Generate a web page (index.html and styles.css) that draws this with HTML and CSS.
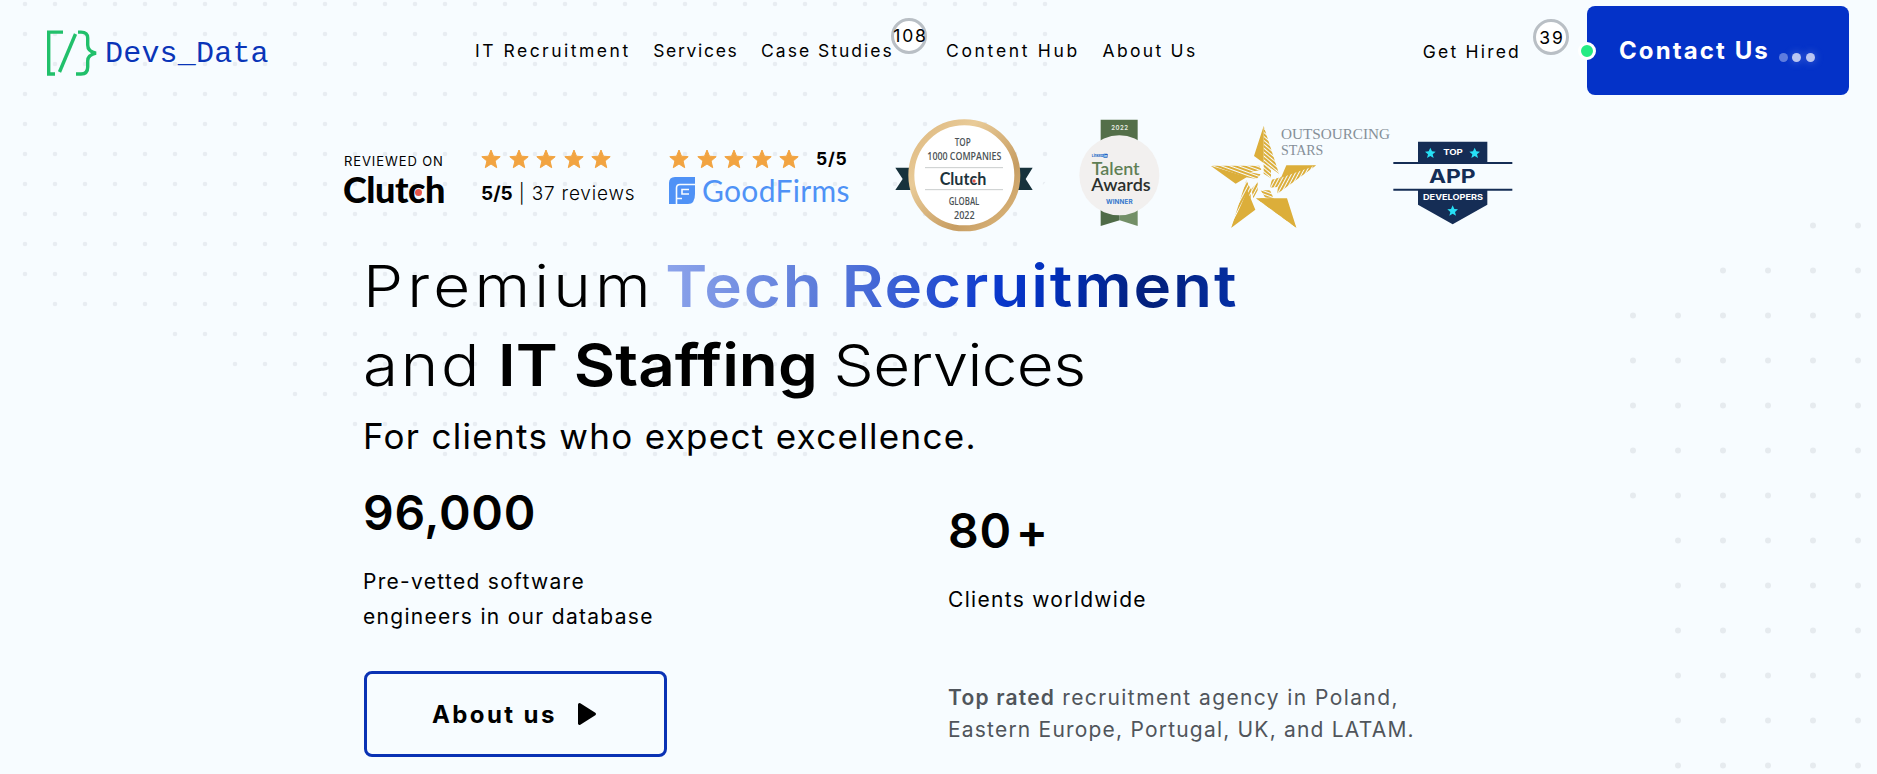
FILE: index.html
```
<!DOCTYPE html>
<html lang="en">
<head>
    <meta charset="UTF-8">
    <meta name="viewport" content="width=device-width, initial-scale=1.0">
    <title>Devs_Data</title>
    <link rel="stylesheet" href="styles.css">
</head>
<body>
    <!-- Dotted background -->
    <svg class="dots" width="1877" height="774" aria-hidden="true">
        <defs>
            <pattern id="dotsLeft" x="10" y="-11" width="30" height="30" patternUnits="userSpaceOnUse">
                <circle cx="15" cy="15" r="2.3" fill="#e8edf2"/>
            </pattern>
            <pattern id="dotsRight" x="1611" y="203" width="45" height="45" patternUnits="userSpaceOnUse">
                <circle cx="22" cy="22.5" r="3" fill="#e6ebef"/>
            </pattern>
        </defs>
        <path fill="url(#dotsLeft)" d="M10 0H1060V165L1030 200V259H1000V289H970V349H910V379H850V409H820V469H430V439H340V409H280V379H220V349H160V319H40V289H10Z"/>
        <path fill="url(#dotsRight)" d="M1791 203H1877V774H1656V518H1611V293H1701V248H1791Z"/>
    </svg>

    <!-- Header -->
    <header class="header">
        <a href="#" class="logo">
            <svg width="52" height="48" viewBox="0 0 52 48" fill="none" stroke="#21c06b" stroke-width="3.4">
                <path d="M18 2.1H3.7V44H10"/>
                <path d="M30.5 4L14.5 42"/>
                <path d="M33 2.1H36C41 2.1 42.7 4.5 42.7 8V15C42.7 19 45 22 51 23.2C45 24.5 42.7 27 42.7 31V37C42.7 41.5 40.5 44 36 44H31"/>
            </svg>
            <span class="logo-text">Devs_Data</span>
        </a>
        <nav class="nav">
            <a href="#" class="nav-recruitment">IT Recruitment</a>
            <a href="#" class="nav-services">Services</a>
            <a href="#" class="nav-cases">Case Studies<span class="count">108</span></a>
            <a href="#" class="nav-content">Content Hub</a>
            <a href="#" class="nav-about">About Us</a>
        </nav>
        <a href="#" class="get-hired">Get Hired<span class="count">39</span></a>
        <a href="#" class="contact">
            <span>Contact Us</span>
            <span class="typing"><i></i><i></i><i></i></span>
        </a>
    </header>

    <!-- Reviews and awards -->
    <section class="awards">
        <svg width="0" height="0" class="defs">
            <symbol id="star" viewBox="0 0 20 20">
                <path fill="#f2a441" stroke="#f2a441" stroke-width="1" stroke-linejoin="round" d="M10 1L12.5 7.2L19.2 7.7L14.1 12L15.7 18.7L10 15L4.3 18.7L5.9 12L.8 7.7L7.5 7.2Z"/>
            </symbol>
        </svg>
        <div class="reviewed">
            <span class="reviewed-label">REVIEWED ON</span>
            <span class="clutch">Clutch</span>
        </div>
        <div class="rating">
            <div class="stars">
                <svg><use href="#star"/></svg><svg><use href="#star"/></svg><svg><use href="#star"/></svg><svg><use href="#star"/></svg><svg><use href="#star"/></svg>
            </div>
            <p class="rating-text"><b>5/5</b> | 37 reviews</p>
        </div>
        <div class="goodfirms">
            <div class="stars">
                <svg><use href="#star"/></svg><svg><use href="#star"/></svg><svg><use href="#star"/></svg><svg><use href="#star"/></svg><svg><use href="#star"/></svg>
                <b>5/5</b>
            </div>
            <div class="goodfirms-logo">
                <svg width="26" height="27" viewBox="0 0 26 27">
                    <path fill="#4f92f6" d="M6 0H26V17Q26 27 19 27H0V6Q0 0 6 0Z"/>
                    <path fill="none" stroke="#f7fcff" stroke-width="1.6" d="M26 7.5H11Q7.5 7.5 7.5 11V27M20 12.5H13V17H20M7.5 21.5H13"/>
                </svg>
                <span>GoodFirms</span>
            </div>
        </div>

        <svg class="badge-clutch" width="138" height="113" viewBox="75 28 414 339">
            <defs>
                <linearGradient id="gold" x1="0" y1="0" x2="1" y2="1">
                    <stop offset="0" stop-color="#dcb67c"/>
                    <stop offset=".3" stop-color="#e9cb98"/>
                    <stop offset=".7" stop-color="#c79d62"/>
                    <stop offset="1" stop-color="#dfba80"/>
                </linearGradient>
            </defs>
            <path fill="#17323c" d="M76 174H140V241H76L98 208ZM488 174H424V241H488L467 208Z"/>
            <circle cx="283" cy="197" r="159" fill="#fff" stroke="url(#gold)" stroke-width="18"/>
            <path stroke="#c9cccd" stroke-width="3" d="M165 174H399M165 240H399"/>
            <g class="badge-caps" text-anchor="middle">
                <text x="278" y="108" textLength="48" lengthAdjust="spacingAndGlyphs">TOP</text>
                <text x="283" y="152" textLength="222" lengthAdjust="spacingAndGlyphs">1000 COMPANIES</text>
                <text x="282" y="285" textLength="92" lengthAdjust="spacingAndGlyphs">GLOBAL</text>
                <text x="283" y="329" textLength="62" lengthAdjust="spacingAndGlyphs">2022</text>
            </g>
            <text x="279" y="225" class="badge-brand" text-anchor="middle" textLength="140" lengthAdjust="spacingAndGlyphs">Clutch</text>
            <circle cx="312" cy="214" r="5" fill="#e8574a"/>
        </svg>

        <svg class="badge-talent" width="81" height="108" viewBox="628 28 243 324">
            <path fill="#546f49" d="M693 30H804V110H693Z"/>
            <path fill="#4f6b47" d="M693 300H750V332L693 349Z"/>
            <path fill="#738f67" d="M750 300H804V349L750 332Z"/>
            <circle cx="749" cy="197" r="120" fill="#f2f0ef"/>
            <text x="750" y="61" class="talent-year" text-anchor="middle" textLength="50">2022</text>
            <text x="666" y="143" class="talent-linked" textLength="34" lengthAdjust="spacingAndGlyphs">Linked</text>
            <rect x="701" y="132" width="13" height="12" rx="2" fill="#1c62c4"/>
            <text x="703" y="142" class="talent-in">in</text>
            <text x="666" y="196" class="talent-name green" textLength="144" lengthAdjust="spacingAndGlyphs">Talent</text>
            <text x="665" y="245" class="talent-name" textLength="178" lengthAdjust="spacingAndGlyphs">Awards</text>
            <text x="749" y="284" class="talent-winner" text-anchor="middle" textLength="80">WINNER</text>
        </svg>

        <svg class="badge-stars" width="182" height="104" viewBox="60 44 546 312">
            <defs>
                <pattern id="hatchA" width="9" height="9" patternUnits="userSpaceOnUse" patternTransform="rotate(40)">
                    <rect width="9" height="6" fill="#dcae3a"/>
                </pattern>
                <pattern id="hatchB" width="9" height="9" patternUnits="userSpaceOnUse" patternTransform="rotate(20)">
                    <rect width="9" height="6" fill="#dcae3a"/>
                </pattern>
                <pattern id="hatchC" width="9" height="9" patternUnits="userSpaceOnUse" patternTransform="rotate(-62)">
                    <rect width="9" height="6" fill="#dcae3a"/>
                </pattern>
            </defs>
            <path fill="#dcae3a" d="M221 47V158L192 137ZM62 166L171 200L137 220ZM379 165H289L273 202ZM124 352L196 298L172 240ZM319 352L291 264H198Z"/>
            <path fill="url(#hatchA)" d="M221 47L267 190L221 158ZM221 160L243 176V204L221 190Z"/>
            <path fill="url(#hatchB)" d="M62 166H208L214 178L180 186L212 192L200 206L165 200Z"/>
            <path fill="url(#hatchC)" d="M379 165L262 250L264 222L273 202L289 182ZM245 208L273 200L262 230L240 232Z"/>
            <path fill="url(#hatchC)" d="M124 352L169 210L184 240L178 300ZM184 236L203 216V240L190 264Z"/>
            <path fill="url(#hatchB)" d="M319 352L198 264H250L291 290ZM212 240H240L250 262H226Z"/>
            <g class="outsourcing">
                <text x="273" y="87" textLength="327" lengthAdjust="spacingAndGlyphs">OUTSOURCING</text>
                <text x="273" y="135" textLength="127" lengthAdjust="spacingAndGlyphs">STARS</text>
            </g>
        </svg>

        <svg class="badge-app" width="120" height="84" viewBox="610 94 360 252">
            <path fill="#152d55" d="M685 96H893V158H685ZM685 240H893V285L789 344L685 285Z"/>
            <path stroke="#152d55" stroke-width="6" d="M611 160H968M611 240H968"/>
            <g fill="#27e0f5">
                <path id="appStar" d="M722 114L727 125L738 126L729 134L732 145L722 139L712 145L715 134L706 126L717 125Z"/>
                <use href="#appStar" x="133"/>
                <use href="#appStar" x="67" y="173"/>
            </g>
            <g class="app-text" text-anchor="middle">
                <text x="790" y="137" textLength="59" lengthAdjust="spacingAndGlyphs">TOP</text>
                <text x="788" y="220" class="app-name" textLength="140" lengthAdjust="spacingAndGlyphs">APP</text>
                <text x="790" y="271" textLength="180" lengthAdjust="spacingAndGlyphs">DEVELOPERS</text>
            </g>
        </svg>
    </section>

    <!-- Hero -->
    <main class="hero">
        <h1>
            <span class="premium">Premium</span> <strong class="gradient">Tech Recruitment</strong><br>
            <span class="and">and</span> <strong class="staffing">IT Staffing</strong> <span class="services">Services</span>
        </h1>
        <p class="tagline">For clients who expect excellence.</p>
        <div class="columns">
            <div class="column">
                <div class="number">96,000</div>
                <p class="caption">Pre-vetted software<br>engineers in our database</p>
                <a href="#" class="about-btn">
                    <span>About us</span>
                    <svg width="20" height="24" viewBox="0 0 20 24"><path stroke="#000" stroke-width="3" stroke-linejoin="round" d="M2.5 2.5L17.5 12L2.5 21.5Z"/></svg>
                </a>
            </div>
            <div class="column column-clients">
                <div class="number">80<span class="plus">+</span></div>
                <p class="caption">Clients worldwide</p>
                <p class="note"><strong>Top rated</strong> <span class="agency">recruitment agency in Poland,</span><br>Eastern Europe, Portugal, UK, and LATAM.</p>
            </div>
        </div>
    </main>
</body>
</html>
```
FILE: styles.css
```
*,
*::before,
*::after {
    margin: 0;
    padding: 0;
    box-sizing: border-box;
}

body {
    position: relative;
    height: 774px;
    overflow: hidden;
    background: #f7fcff;
    color: #000;
    font-family: Inter, sans-serif;
}

a {
    color: inherit;
    text-decoration: none;
}

.dots {
    position: absolute;
    inset: 0;
    z-index: -1;
}

.defs {
    position: absolute;
}

/* Header */
.header {
    display: flex;
    align-items: center;
    height: 101px;
    padding: 0 28px 0 45px;
    font-size: 17.5px;
}

.logo {
    display: flex;
    align-items: center;
    gap: 8px;
    width: 430px;
    padding-top: 6px;
}

.logo-text {
    font: 30px "Liberation Mono", monospace;
    letter-spacing: 0.2px;
    color: #0a35b8;
}

.nav {
    display: flex;
    gap: 22.5px;
    margin-right: auto;
    padding-bottom: 1px;
}

.nav a,
.get-hired {
    display: flex;
    white-space: nowrap;
}

.nav-recruitment { letter-spacing: 2.5px; }
.nav-services { letter-spacing: 1.7px; }
.nav-cases { letter-spacing: 2px; }
.nav-content { letter-spacing: 2.7px; }
.nav-about { letter-spacing: 2.3px; }

.count {
    display: flex;
    flex-shrink: 0;
    align-items: center;
    justify-content: center;
    width: 36px;
    height: 36px;
    margin: -22px -4px -11px -2.3px;
    padding-left: 2px;
    border: 3px solid #b9bfc5;
    border-radius: 50%;
    background: #fff;
    letter-spacing: 1.8px;
}

.get-hired {
    padding-top: 2px;
    letter-spacing: 2.2px;
}

.get-hired .count {
    margin: -22px 18px -10px 12px;
}

.contact {
    position: relative;
    display: flex;
    align-items: center;
    width: 262px;
    height: 89px;
    padding-left: 32px;
    border-radius: 8px;
    background: #0432c8;
    color: #fff;
    font-size: 24px;
    font-weight: 700;
    letter-spacing: 2.1px;
}

.contact::before {
    content: "";
    position: absolute;
    left: -9px;
    top: 36px;
    width: 18px;
    height: 18px;
    border: 3px solid #fff;
    border-radius: 50%;
    background: #25eb83;
}

.typing {
    display: flex;
    gap: 4.5px;
    margin: 13px 0 0 9px;
}

.typing i {
    width: 9px;
    height: 9px;
    border-radius: 50%;
    background: #b9c5f2;
    box-shadow: 0 0 8px rgba(185, 197, 242, 0.4);
}

.typing i:first-child {
    background: #5e7cde;
    box-shadow: none;
}

/* Reviews */
.awards {
    display: flex;
    height: 130px;
    padding: 18px 0 0 344px;
}

.reviewed {
    display: flex;
    flex-direction: column;
    width: 136px;
    padding-top: 34px;
}

.reviewed-label {
    font-size: 13px;
    line-height: 16px;
    letter-spacing: 0.9px;
}

.clutch {
    position: relative;
    margin-left: -1px;
    font: 900 36px/40px Lato, sans-serif;
    letter-spacing: -0.4px;
}

.clutch::after {
    content: "";
    position: absolute;
    left: 72px;
    top: 20px;
    width: 7px;
    height: 7px;
    border-radius: 50%;
    background: #e4574a;
}

.rating {
    width: 188px;
    padding: 29px 0 0 1px;
}

.stars {
    display: flex;
    align-items: center;
    gap: 7.6px;
    height: 21px;
}

.stars svg {
    width: 20px;
    height: 20px;
}

.stars b {
    margin-left: 9px;
    font-size: 17.5px;
    letter-spacing: 0.8px;
}

.rating-text {
    margin-top: 13px;
    font-size: 19px;
    font-weight: 300;
    line-height: 23px;
    letter-spacing: 0.8px;
    white-space: nowrap;
}

.rating-text b {
    font-weight: 700;
    letter-spacing: 0;
}

.goodfirms {
    width: 227px;
    padding: 29px 0 0 1px;
}

.goodfirms-logo {
    display: flex;
    align-items: center;
    gap: 7px;
    margin-top: 5px;
    font: 30px/32px Lato, sans-serif;
    letter-spacing: 0.3px;
    color: #4f92f6;
}

.badge-talent {
    margin-left: 46px;
}

.badge-stars {
    margin: 6px 0 0 50px;
}

.badge-app {
    margin: 22px 0 0 1px;
}

.badge-caps {
    font: 600 33px "Open Sans", sans-serif;
    fill: #4c5356;
}

.badge-brand {
    font: 700 50px Lato, sans-serif;
    fill: #1d333c;
}

.talent-year {
    font: 600 18px Inter, sans-serif;
    fill: #e8ede5;
}

.talent-linked,
.talent-in {
    font: 700 12px Inter, sans-serif;
    fill: #1c62c4;
}

.talent-in {
    font-size: 10px;
    fill: #fff;
}

.talent-name {
    font: 600 52px Lato, sans-serif;
    fill: #2b2f2c;
}

.talent-name.green {
    fill: #5f7f55;
}

.talent-winner {
    font: 700 19px Inter, sans-serif;
    fill: #3478cc;
}

.outsourcing {
    font: 44px "Liberation Serif", serif;
    fill: #858f98;
}

.app-text {
    font: 700 22px Inter, sans-serif;
    fill: #fff;
}

.app-text .app-name {
    font-size: 55px;
    fill: #152d55;
}

/* Hero */
.hero {
    padding-left: 363px;
}

.hero h1 {
    width: 900px;
    padding-top: 16px;
    font-size: 58px;
    font-weight: 300;
    line-height: 78.5px;
    white-space: nowrap;
    transform: scaleX(1.1);
    transform-origin: left;
}

.hero h1 strong {
    font-weight: 600;
}

.premium {
    letter-spacing: 3.8px;
}

.gradient {
    margin-left: -7px;
    letter-spacing: 1.7px;
    background: linear-gradient(100deg, #8ea5eb 0%, #5b7bda 28%, #0a38cc 58%, #0230bd 66%, #03207a 84%, #0530a8 100%);
    -webkit-background-clip: text;
    background-clip: text;
    color: transparent;
}

.and {
    letter-spacing: 2.5px;
}

.staffing {
    margin-left: -2px;
}

.services {
    margin-left: -2px;
    letter-spacing: -0.6px;
}

.tagline {
    padding-top: 1px;
    font-size: 35px;
    line-height: 62px;
    letter-spacing: 1.3px;
}

.columns {
    display: flex;
    padding-top: 16px;
}

.column {
    width: 585px;
}

.column-clients {
    padding-top: 18px;
}

.number {
    font-size: 48px;
    font-weight: 600;
    line-height: 60px;
    letter-spacing: 0.7px;
}

.plus {
    margin-left: 4px;
}

.caption {
    margin-top: 21px;
    font-size: 21px;
    line-height: 35px;
    letter-spacing: 1.3px;
}

.about-btn {
    display: flex;
    align-items: center;
    gap: 20px;
    width: 303px;
    height: 86px;
    margin: 37px 0 0 1px;
    padding-left: 65px;
    border: 3px solid #0a32b4;
    border-radius: 8px;
    font-size: 24px;
    font-weight: 700;
    letter-spacing: 2.4px;
}

.note {
    margin-top: 65px;
    font-size: 21px;
    line-height: 32px;
    letter-spacing: 1.2px;
    color: #50555b;
    white-space: nowrap;
}

.note strong {
    font-weight: 600;
}

.agency {
    letter-spacing: 1.4px;
}
```
